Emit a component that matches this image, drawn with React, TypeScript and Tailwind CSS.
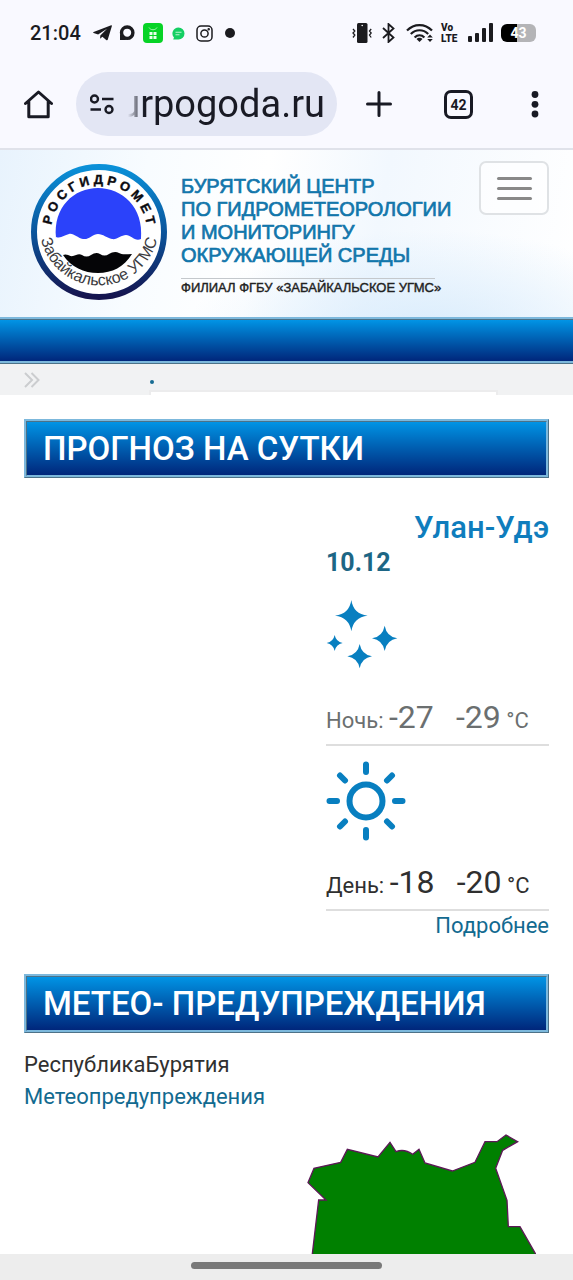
import React from "react";

const roboto = "font-['Roboto',sans-serif]";

function StatusBar() {
  return (
    <div className="flex h-[66px] items-center justify-between pr-[37px] pl-[30px] text-[#1b1b1f]">
      <div className="flex items-center">
        <span className="w-[50px] text-[20px] leading-[24px] font-medium">21:04</span>
        <svg className="ml-[13px]" width="19" height="16" viewBox="0 0 19 16" fill="currentColor">
          <path d="M18.2.2.6 7.1c-.6.3-.6.8 0 1l4.500 1.400L14 3.700 7.300 10.400l-.2 3.400 2.300-2 4.100 3.400c.6.3 1.100.1 1.300-.6L18.900.9c.1-.6-.2-.9-.7-.7Z" />
        </svg>
        <svg className="ml-[7px]" width="16" height="16" viewBox="0 0 16 16">
          <circle cx="8.200" cy="7.700" r="5.700" fill="none" stroke="currentColor" strokeWidth="3.400" />
          <path d="M1 9v6h6l-2-3Z" fill="currentColor" />
        </svg>
        <svg className="ml-[8px]" width="20" height="20" viewBox="0 0 20 20">
          <rect width="20" height="20" rx="4" fill="#07d326" />
          <path d="M6 4.500c1.500 3 6.500 3 8 0" fill="none" stroke="#9cf5a8" strokeWidth="1" />
          <rect x="6.500" y="9" width="3" height="3" fill="#e8ffe9" />
          <rect x="10.500" y="9" width="3" height="3" fill="#e8ffe9" />
          <rect x="6.500" y="13" width="3" height="3" fill="#e8ffe9" />
          <rect x="10.500" y="13" width="3" height="3" fill="#e8ffe9" />
        </svg>
        <svg className="ml-[9px]" width="13" height="13" viewBox="0 0 13 13">
          <path d="M6.500.500a6 6 0 1 1 0 12H1.200l.8-2A6 6 0 0 1 6.500.500Z" fill="#14cf63" />
          <path d="M3.500 5.300h6M3.500 7.800h4" stroke="#b9f5d0" strokeWidth="1.100" />
        </svg>
        <svg className="ml-[11px]" width="17" height="17" viewBox="0 0 17 17" fill="none" stroke="currentColor" strokeWidth="1.500">
          <rect x="1" y="1" width="15" height="15" rx="4" />
          <circle cx="8.500" cy="8.500" r="3.600" />
          <circle cx="12.700" cy="4.300" r=".5" fill="currentColor" />
        </svg>
        <span className="ml-[12px] size-[10px] rounded-full bg-[#1b1b1f]" />
      </div>
      <div className="flex items-center">
        <svg width="20" height="20" viewBox="0 0 20 20" fill="none" stroke="currentColor" strokeWidth="1.300">
          <rect x="5" y="0" width="10.500" height="20" rx="1.500" fill="currentColor" stroke="none" />
          <circle cx="10.200" cy="2.500" r=".8" fill="#fff" stroke="none" />
          <path d="m1 6 1.800 2L1 10l1.800 2L1 14.500M19.200 6l-1.700 2 1.700 2-1.700 2 1.700 2.500" />
        </svg>
        <svg className="ml-[10px]" width="13" height="20" viewBox="0 0 13 20" fill="none" stroke="currentColor" strokeWidth="1.800">
          <path d="m1 5 10.500 9.500L6.500 19V1l5 4.500L1 15" />
        </svg>
        <svg className="ml-[11px]" width="29" height="20" viewBox="0 0 29 20" fill="none" stroke="currentColor" strokeWidth="2.200">
          <path d="M1 7.500C8 .2 19 .2 26 7.500M4.800 11c5-5 12.400-5 17.400 0M8.600 14.500c2.900-2.800 7-2.800 9.800 0" />
          <path d="m13.500 19-3-3c1.500-1.700 4.500-1.700 6 0Z" fill="currentColor" stroke="none" />
          <path d="m24 11.500 2.800 3h-5.600ZM24 19l2.800-3h-5.600Z" fill="currentColor" stroke="none" />
        </svg>
        <span className="ml-[6px] flex w-[20px] flex-col text-[10px] leading-[11px] font-black">
          <span>Vo</span>
          <span>LTE</span>
        </span>
        <svg className="ml-[7px]" width="25" height="20" viewBox="0 0 25 20" fill="currentColor">
          <rect x="0" y="13" width="4" height="6" rx="1" />
          <rect x="7" y="10" width="4" height="9" rx="1" />
          <rect x="14" y="5" width="4" height="14" rx="1" />
          <rect x="21" y="0" width="4" height="19" rx="1" />
        </svg>
        <div className="ml-[8px] flex h-[18px] w-[35px] items-center justify-center rounded-[6px] bg-linear-to-r from-black from-45% to-[#b4b4b7] to-45% text-[14px] leading-[18px] font-bold text-white">
          43
        </div>
      </div>
    </div>
  );
}

function Toolbar() {
  return (
    <div className="flex h-[84px] items-start border-b-2 border-[#e0e2ea] pt-[6px] text-[#191a24]">
      <button aria-label="Домой" className="mt-[18px] ml-[24px]">
        <svg width="29" height="29" viewBox="0 0 29 29" fill="none" stroke="currentColor" strokeWidth="3" strokeLinejoin="round" strokeLinecap="round">
          <path d="M1.500 13.500 14.500 2l13 11.500M4.800 11.500v15.200h19.400V11.500" />
        </svg>
      </button>
      <button className="ml-[23px] flex h-[64px] w-[261px] items-center rounded-full bg-[#e3e6f4] pl-[14px]">
        <svg width="24" height="21" viewBox="0 0 24 21" fill="none" stroke="currentColor" strokeWidth="2.400">
          <circle cx="4.500" cy="5" r="3.500" />
          <circle cx="19" cy="15.500" r="3.500" />
          <path d="M12 5h11.500M.5 15.500H11" />
        </svg>
        <span className="ml-[14px] flex w-[197px] justify-end overflow-hidden mask-[linear-gradient(to_right,transparent,black_16px)] font-['Roboto',sans-serif] text-[38px] leading-[48px]">
          burpogoda.ru
        </span>
      </button>
      <button aria-label="Новая вкладка" className="mt-[19px] ml-[29px]">
        <svg width="26" height="26" viewBox="0 0 26 26" stroke="currentColor" strokeWidth="3" strokeLinecap="round">
          <path d="M13 1.500v23M1.500 13h23" />
        </svg>
      </button>
      <button aria-label="Вкладки" className="mt-[18px] ml-[52px] flex size-[29px] items-center justify-center rounded-[7px] border-3 border-[#191a24] text-[14px] leading-[14px] font-bold">
        42
      </button>
      <button aria-label="Меню браузера" className="mt-[19px] ml-[58px]">
        <svg width="8" height="27" viewBox="0 0 8 27" fill="currentColor">
          <circle cx="4" cy="3.500" r="3.400" />
          <circle cx="4" cy="13.300" r="3.400" />
          <circle cx="4" cy="23" r="3.400" />
        </svg>
      </button>
    </div>
  );
}

function Emblem() {
  return (
    <svg className="mt-[14px] shrink-0" width="136" height="136" viewBox="0 0 136 136" role="img" aria-label="Росгидромет, Забайкальское УГМС">
      <defs>
        <linearGradient id="ring" x1="0" y1="0" x2="0" y2="1">
          <stop offset="0" stopColor="#0a90d8" />
          <stop offset=".55" stopColor="#0b4f96" />
          <stop offset="1" stopColor="#16144e" />
        </linearGradient>
        <path id="arcTop" d="M20 68A48 48 0 0 1 116 68" />
        <path id="arcBottom" d="M8.500 62A59.500 59.500 0 0 0 127.500 62" />
      </defs>
      <circle cx="68" cy="68" r="65" fill="#fff" stroke="url(#ring)" strokeWidth="6" />
      <path d="M25 74C22 43 43 24 67 24s46 19 43 51c-6 3-10-4-15-4s-9 5-14 4-9-5-14-5-9 6-15 5-9-6-14-5-8 5-13 3Z" fill="#2b42fa" />
      <path d="M32 91c4-2 7 2 10 1s6-3 9-1 6 2 9 0 6-3 9-1 6 2 9 0 7-3 10-1 8 1 13 1c-8 13-20 19-34 19s-27-6-35-18Z" fill="#050507" />
      <text className="font-['Liberation_Sans',sans-serif]" fill="#0b0b10" stroke="#0b0b10" strokeWidth=".4" fontSize="13" fontWeight="700">
        <textPath href="#arcTop" startOffset="50%" textAnchor="middle">Р О С Г И Д Р О М Е Т</textPath>
      </text>
      <text className="font-['Liberation_Sans',sans-serif]" fill="#3b3b40" fontSize="16">
        <textPath href="#arcBottom" startOffset="50%" textAnchor="middle">Забайкальское УГМС</textPath>
      </text>
    </svg>
  );
}

function SiteHeader() {
  return (
    <header className="flex h-[167px] items-start bg-[radial-gradient(ellipse_at_75%_110%,#d9ecfc_0%,transparent_40%),linear-gradient(100deg,#e8f3fd_0%,#f8fcff_25%,#ffffff_45%,#f2f8fe_65%,#ffffff_100%)] pr-[24px] pl-[31px]">
      <Emblem />
      <div className="mt-[25px] ml-[14px] font-['Liberation_Sans',Arial,sans-serif]">
        <p className="w-max text-[20px] leading-[23px] font-medium text-[#1276ab] [-webkit-text-stroke:0.700px_#1276ab]">
          БУРЯТСКИЙ ЦЕНТР<br />
          ПО ГИДРОМЕТЕОРОЛОГИИ<br />
          И МОНИТОРИНГУ<br />
          ОКРУЖАЮЩЕЙ СРЕДЫ
        </p>
        <p className="mt-[11px] w-[254px] border-t border-[#c4c8cc] pt-[1px] text-[13px] leading-[16px] whitespace-nowrap text-[#222] [-webkit-text-stroke:0.400px_#222]">
          ФИЛИАЛ ФГБУ «ЗАБАЙКАЛЬСКОЕ УГМС»
        </p>
      </div>
      <button aria-label="Меню сайта" className="mt-[11px] ml-auto flex h-[54px] w-[70px] shrink-0 flex-col items-center justify-center gap-[7px] rounded-[7px] border-2 border-[#dfe2e5] bg-white/60">
        <span className="h-[3px] w-[35px] rounded-full bg-[#888]" />
        <span className="h-[3px] w-[35px] rounded-full bg-[#888]" />
        <span className="h-[3px] w-[35px] rounded-full bg-[#888]" />
      </button>
    </header>
  );
}

function SectionTitle({ children }: { children: React.ReactNode }) {
  return (
    <h2 className="flex h-[59px] items-center border-3 border-[#7cb8dc] bg-linear-to-b from-[#0394e5] to-[#01267b] pl-[16px] text-[33px] leading-[40px] font-medium whitespace-nowrap text-white [border-style:ridge]">
      {children}
    </h2>
  );
}

function Reading({ label, low, high, tone }: { label: string; low: string; high: string; tone: string }) {
  return (
    <p className={`flex h-[48px] items-baseline border-b-2 border-[#dedede] text-[22px] leading-[38px] whitespace-pre ${tone}`}>
      {label} <span className="w-[67px] text-[32px]">{low}</span>
      <span className="text-[32px]">{high}</span> °C
    </p>
  );
}

function Stars() {
  return (
    <svg className="mt-[20px]" width="72" height="69" viewBox="50 313 216 207" fill="#087fc0">
      <path d="M126 313q6 42 49 47-43 5-49 47-6-42-49-47 43-5 49-47Z" />
      <path d="M226 390q6 33 38 38-32 5-38 38-6-33-38-38 32-5 38-38Z" />
      <path d="M151 445q6 32 37 37-31 5-37 36-6-31-37-36 31-5 37-37Z" />
      <path d="M76 418q4 20 24 24-20 4-24 24-4-20-24-24 20-4 24-24Z" />
    </svg>
  );
}

function Sun() {
  return (
    <svg className="mt-[15px]" width="80" height="80" viewBox="0 0 80 80" fill="none" stroke="#087fc0" strokeWidth="6" strokeLinecap="round">
      <circle cx="40" cy="40" r="16.500" />
      <path d="M40 3.500v7.500M40 69v7.500M3.500 40H11M69 40h7.500M14 14.500l5 5M61 60.500l5 5M66 14.500l-5 5M19 60.500l-5 5" />
    </svg>
  );
}

function RegionMap() {
  return (
    <svg className="mt-[21px] mr-[13px] ml-auto block" width="230" height="120" viewBox="48 42 690 360" role="img" aria-label="Карта Республики Бурятия">
      <path
        d="M66 410 86 240h22L54 188l18-43 80-18 20-39 92 23 36-44 18 28q25-10 50 8l19-15 18 41 82 24 68-26 30-62h36l27-20 35 20-45 26-21 54 34 96 4 79h35l47 82v12Z"
        fill="#008000"
        stroke="#5d1857"
        strokeWidth="4"
      />
    </svg>
  );
}

export default function App() {
  return (
    <div className={`flex min-h-screen flex-col overflow-hidden bg-white ${roboto}`}>
      <div className="bg-[#f9f9ff]">
        <StatusBar />
        <Toolbar />
      </div>
      <SiteHeader />
      <div className="h-[47px] border-y-3 border-[#7cb8dc] bg-linear-to-b from-[#0394e5] to-[#01267b] [border-style:ridge_none]" />
      <div className="flex h-[31px] items-end bg-[#f1f2f3] pl-[24px]">
        <svg className="mb-[7px]" width="16" height="16" viewBox="0 0 16 16" fill="none" stroke="#cbcdcf" strokeWidth="2">
          <path d="m1 1 7 7-7 7M7.500 1l7 7-7 7" />
        </svg>
        <div className="ml-[109px] flex w-[349px] flex-col">
          <span className="mb-[6px] ml-[1px] size-[4px] rounded-full bg-[#176c93]" />
          <span className="h-[5px] border-2 border-b-0 border-[#ececed] bg-white" />
        </div>
      </div>
      <main className="flex-1 px-[24px] pt-[24px] text-[#303030]">
        <SectionTitle>ПРОГНОЗ НА СУТКИ</SectionTitle>
        <div className="mt-[32px] ml-auto w-[223px]">
          <h3 className="text-right text-[31px] leading-[36px] font-medium text-[#0f7dbd]">Улан-Удэ</h3>
          <p className="text-[25px] leading-[34px] font-bold text-[#1d6685]">10.12</p>
          <Stars />
          <div className="mt-[29px]">
            <Reading label="Ночь:" low="-27" high="-29" tone="text-[#6b6f70]" />
          </div>
          <Sun />
          <div className="mt-[22px]">
            <Reading label="День:" low="-18" high="-20" tone="text-[#2f2f2f]" />
          </div>
          <a href="#forecast" className="block text-right text-[22px] leading-[30px] text-[#126a90]">Подробнее</a>
        </div>
        <div className="mt-[33px]">
          <SectionTitle>МЕТЕО- ПРЕДУПРЕЖДЕНИЯ</SectionTitle>
        </div>
        <p className="mt-[16px] text-[22px] leading-[32px]">РеспубликаБурятия</p>
        <a href="#warnings" className="block text-[22px] leading-[32px] text-[#126a90]">Метеопредупреждения</a>
        <RegionMap />
      </main>
      <footer className="flex h-[26px] justify-center bg-[#ededed] pt-[8px]">
        <span className="h-[7px] w-[191px] rounded-full bg-[#797979]" />
      </footer>
    </div>
  );
}
